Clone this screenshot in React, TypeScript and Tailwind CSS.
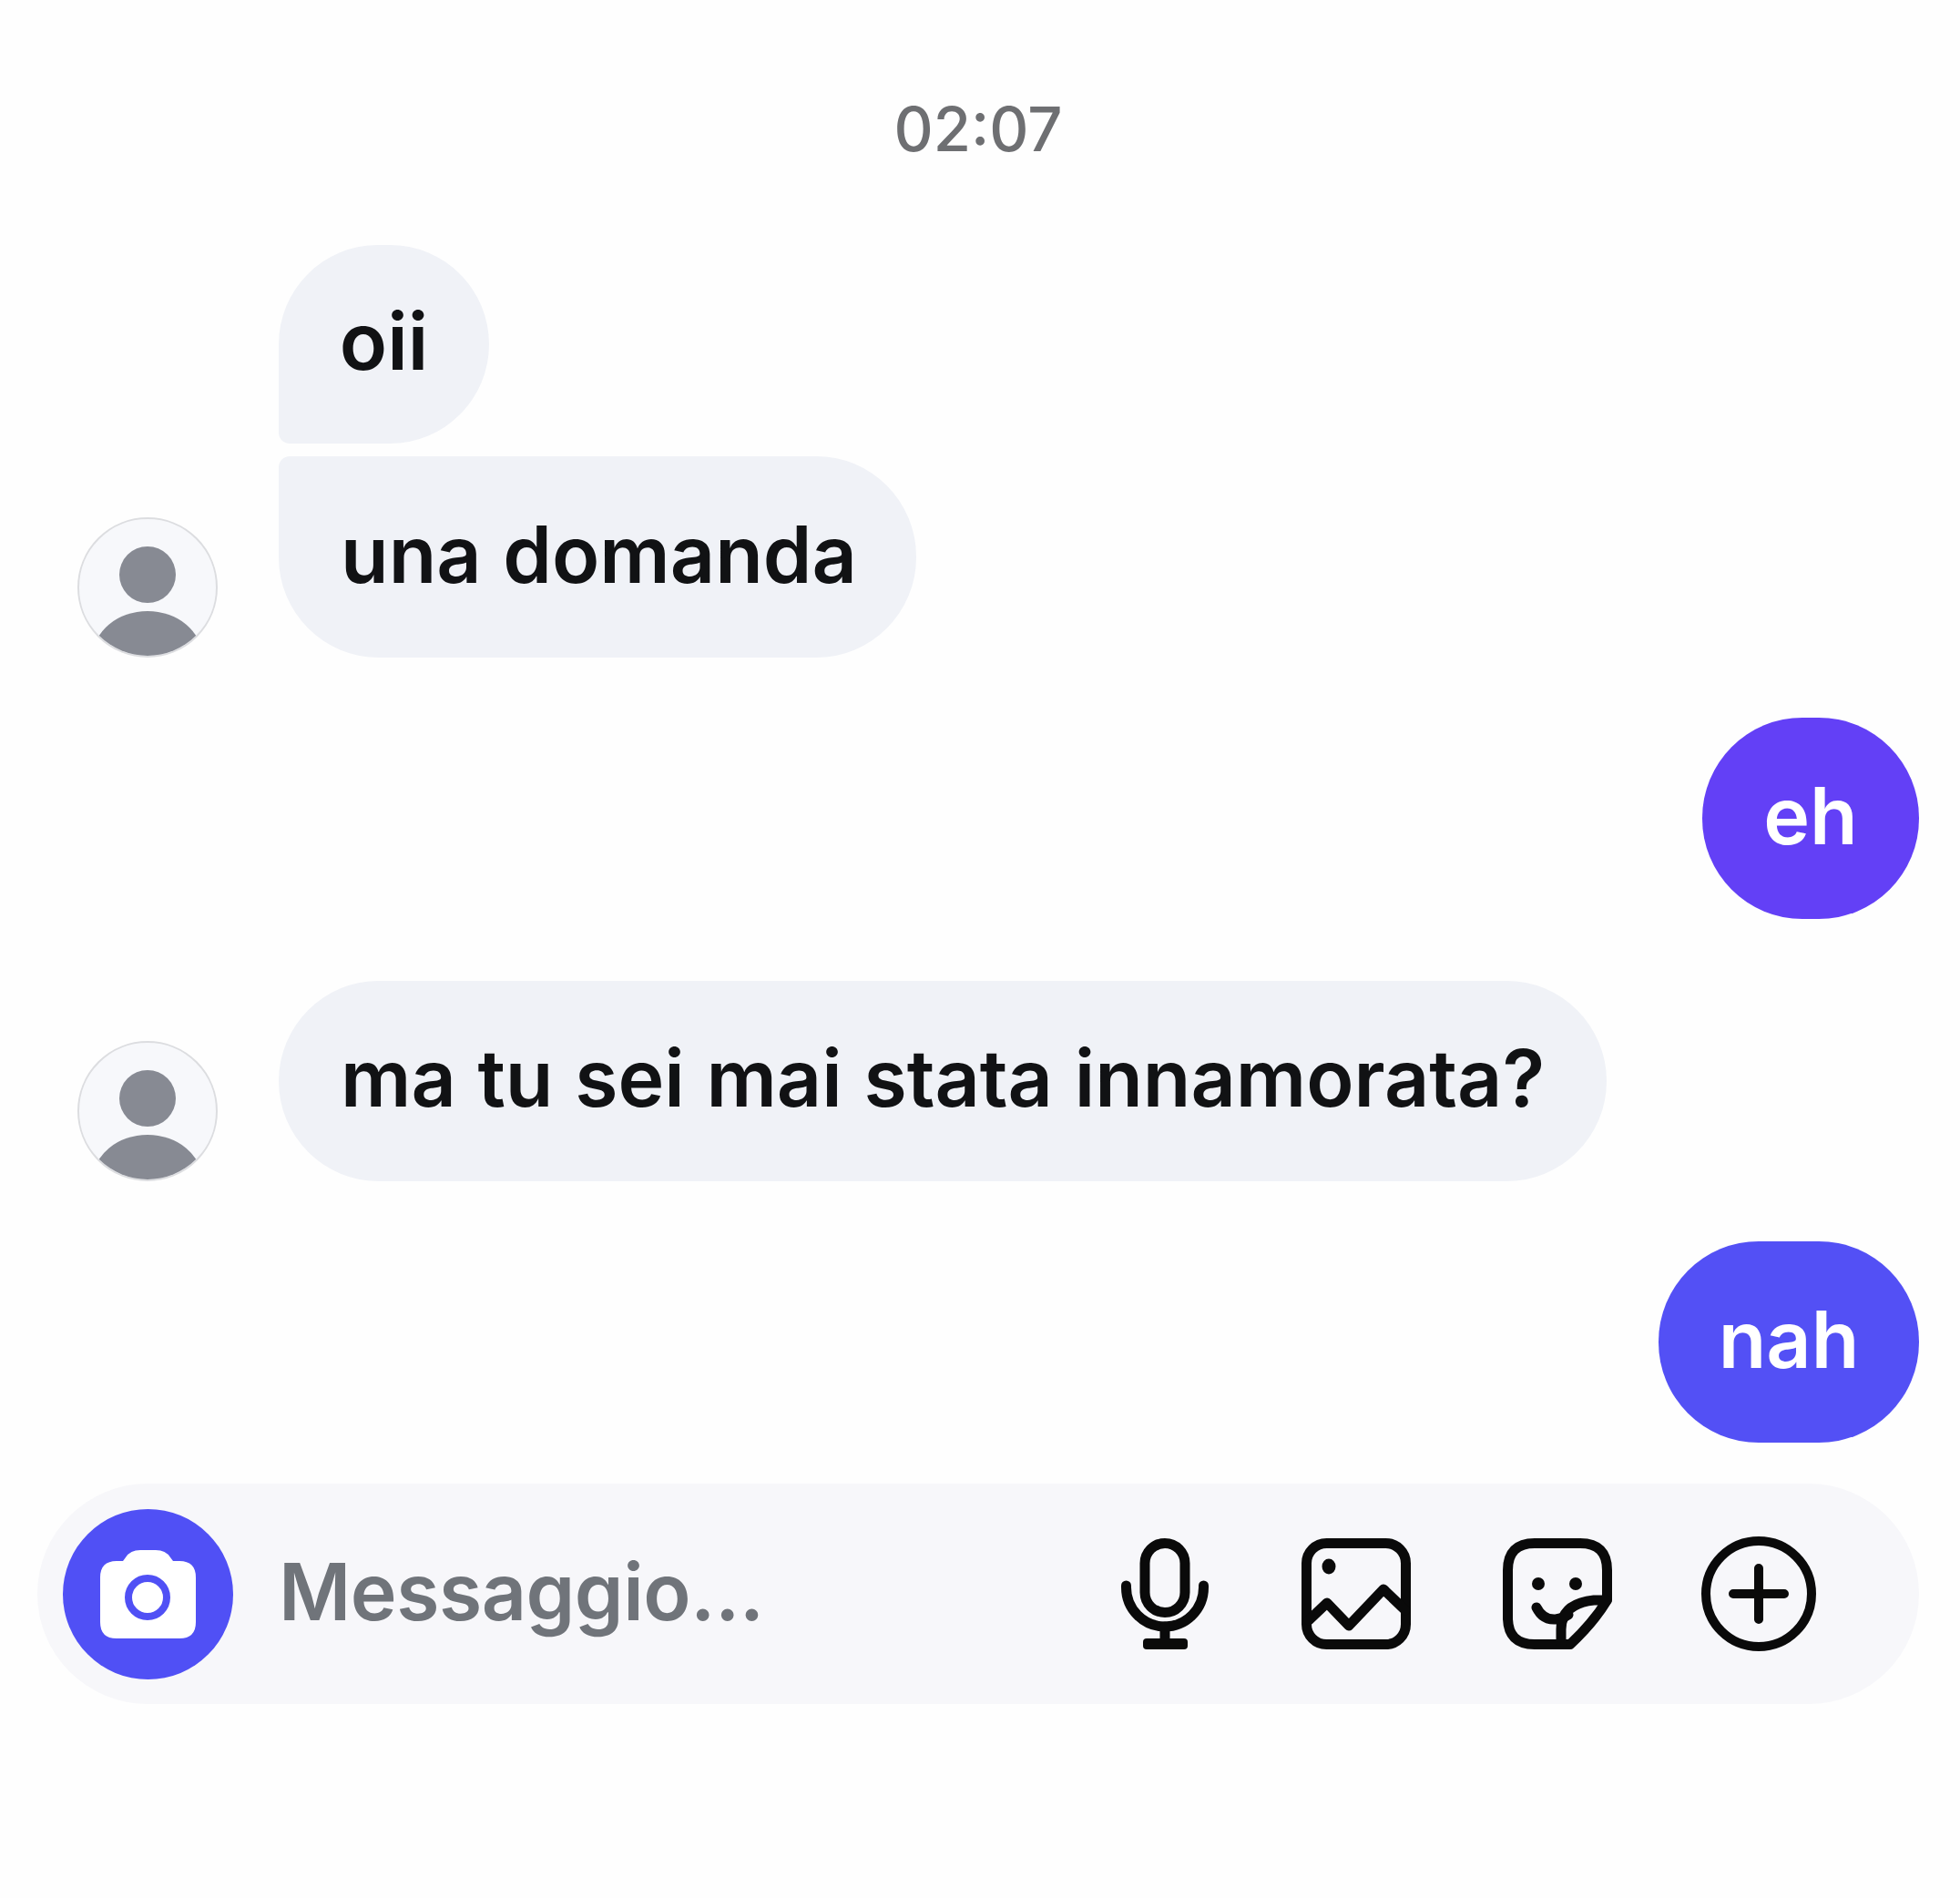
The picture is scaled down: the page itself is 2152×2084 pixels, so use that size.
const font = { fontFamily: 'Inter, "Liberation Sans", sans-serif' };

function Avatar() {
  return (
    <svg width="154" height="154" viewBox="0 0 154 154" className="shrink-0">
      <defs>
        <clipPath id="av"><circle cx="77" cy="77" r="75" /></clipPath>
      </defs>
      <circle cx="77" cy="77" r="76" fill="#f7f8fb" stroke="#dcdde0" strokeWidth="2" />
      <circle cx="77" cy="63" r="31" fill="#878a93" />
      <g clipPath="url(#av)"><ellipse cx="77" cy="153" rx="60" ry="50" fill="#878a93" /></g>
    </svg>
  );
}

function Camera() {
  return (
    <svg width="105" height="97" viewBox="0 0 105 97">
      <path d="M28 8 Q33 0 44 0 H61 Q72 0 77 8 L80 12 H87 Q105 12 105 30 V79 Q105 97 87 97 H18 Q0 97 0 79 V30 Q0 12 18 12 H25 Z" fill="#fff" />
      <circle cx="52" cy="52" r="21" fill="#fff" stroke="#5050f5" strokeWidth="8" />
    </svg>
  );
}

function Mic() {
  return (
    <svg width="96" height="122" viewBox="0 0 96 122" fill="none" stroke="#0a0a0a" strokeWidth="11" strokeLinecap="round">
      <rect x="26" y="5.5" width="44" height="76" rx="22" />
      <path d="M5.5 52 v2 a42.5 43 0 0 0 85 0 v-2" />
      <path d="M48 97 V114" />
      <rect x="24" y="110" width="49" height="12" rx="4" fill="#0a0a0a" stroke="none" />
    </svg>
  );
}

function ImageIcon() {
  return (
    <svg width="120" height="122" viewBox="0 0 120 122" fill="none" stroke="#0a0a0a" strokeWidth="11" strokeLinejoin="round" strokeLinecap="round">
      <rect x="5.5" y="5.5" width="109" height="111" rx="22" />
      <ellipse cx="30" cy="31" rx="7.5" ry="8.5" fill="#0a0a0a" stroke="none" />
      <path d="M8 90 L28 71 L52 96 L90 56 L114 79" />
    </svg>
  );
}

function Sticker() {
  return (
    <svg width="120" height="122" viewBox="0 0 120 122" fill="none" stroke="#0a0a0a" strokeWidth="11" strokeLinejoin="round" strokeLinecap="round">
      <path d="M35 5.5 H85 Q114.5 5.5 114.5 35 V68 Q100 92 74 116.5 H35 Q5.5 116.5 5.5 87 V35 Q5.5 5.5 35 5.5 Z" />
      <path d="M114 68 H100 Q64 72 64 100 V116" />
      <circle cx="39" cy="50" r="7" fill="#0a0a0a" stroke="none" />
      <circle cx="80" cy="50" r="7" fill="#0a0a0a" stroke="none" />
      <path d="M37 76 Q44 90 58 89 Q66 88 72 84" />
    </svg>
  );
}

function Plus() {
  return (
    <svg width="126" height="126" viewBox="0 0 126 126" fill="none" stroke="#0a0a0a" strokeWidth="10" strokeLinecap="round">
      <circle cx="63" cy="63" r="58" />
      <path d="M35 63 H91 M63 35 V91" />
    </svg>
  );
}

export default function App() {
  const text = "text-[86px] font-semibold leading-none [word-spacing:2px] whitespace-nowrap pb-[6px]";
  return (
    <div className="w-[2152px] h-[2084px] bg-[#fefefe] pt-[100px] flex flex-col overflow-hidden" style={font}>
      <div className="h-[84px] flex items-center justify-center text-[67px] font-medium text-[#6e6f72] pr-[4px]">02:07</div>

      <div className="mt-[85px] ml-[306px] h-[218px] w-[231px] flex items-center justify-center bg-[#f0f2f7] text-[#111214] rounded-[110px] rounded-bl-[12px]">
        <span className={text}>oii</span>
      </div>

      <div className="mt-[14px] ml-[85px] flex items-end gap-[67px]">
        <Avatar />
        <div className="h-[221px] w-[700px] pl-[68px] flex items-center bg-[#f0f2f7] text-[#111214] rounded-[110px] rounded-tl-[12px]">
          <span className={text}>una domanda</span>
        </div>
      </div>

      <div className="mt-[66px] mr-[45px] self-end h-[221px] w-[238px] flex items-center justify-center bg-[#6340f6] text-white rounded-[110px]">
        <span className={text}>eh</span>
      </div>

      <div className="mt-[68px] ml-[85px] flex items-end gap-[67px]">
        <Avatar />
        <div className="h-[220px] px-[68px] flex items-center bg-[#f0f2f7] text-[#111214] rounded-[110px]">
          <span className={text}>ma tu sei mai stata innamorata?</span>
        </div>
      </div>

      <div className="mt-[66px] mr-[45px] self-end h-[221px] w-[286px] flex items-center justify-center bg-[#5350f5] text-white rounded-[110px]">
        <span className={text}>nah</span>
      </div>

      <div className="mt-[45px] ml-[41px] w-[2066px] h-[242px] pl-[28px] flex items-center bg-[#f7f7fa] rounded-[121px]">
        <div className="w-[187px] h-[187px] rounded-full bg-[#5050f5] flex items-center justify-center shrink-0">
          <Camera />
        </div>
        <div className="ml-[50px] text-[#70747a] text-[86px] font-semibold leading-none tracking-[-0.5px] whitespace-nowrap pb-[4px]">Messaggio...</div>
        <div className="ml-auto mr-[113px] flex items-center">
          <Mic />
          <div className="ml-[102px]"><ImageIcon /></div>
          <div className="ml-[101px]"><Sticker /></div>
          <div className="ml-[98px]"><Plus /></div>
        </div>
      </div>
    </div>
  );
}
